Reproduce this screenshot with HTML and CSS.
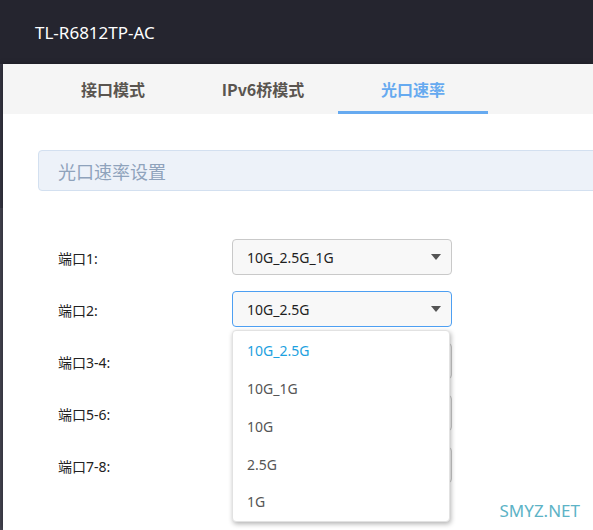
FILE: index.html
```html
<!DOCTYPE html>
<html lang="zh-CN">
<head>
<meta charset="utf-8">
<title>TL-R6812TP-AC</title>
<link rel="stylesheet" href="styles.css">
</head>
<body>
<div class="page">
  <header class="topbar"><span class="brand">TL-R6812TP-AC</span></header>
  <div class="main">
    <div class="rail"></div>
    <div class="panel">
      <nav class="tabs">
        <div class="tab">接口模式</div>
        <div class="tab">IPv6桥模式</div>
        <div class="tab active">光口速率</div>
      </nav>
      <div class="content">
        <div class="section-title">光口速率设置</div>
        <div class="form">
          <div class="row">
            <label class="label">端口1:</label>
            <div class="select"><span>10G_2.5G_1G</span><i class="caret"></i></div>
          </div>
          <div class="row">
            <label class="label">端口2:</label>
            <div class="select-wrap">
              <div class="select focus"><span>10G_2.5G</span><i class="caret"></i></div>
              <ul class="dropdown">
                <li class="opt selected">10G_2.5G</li>
                <li class="opt">10G_1G</li>
                <li class="opt">10G</li>
                <li class="opt">2.5G</li>
                <li class="opt">1G</li>
              </ul>
            </div>
          </div>
          <div class="row">
            <label class="label">端口3-4:</label>
            <div class="select"><span></span><i class="caret"></i></div>
          </div>
          <div class="row">
            <label class="label">端口5-6:</label>
            <div class="select"><span></span><i class="caret"></i></div>
          </div>
          <div class="row">
            <label class="label">端口7-8:</label>
            <div class="select"><span></span><i class="caret"></i></div>
          </div>
        </div>
      </div>
    </div>
  </div>
  <div class="watermark">SMYZ.NET</div>
</div>
</body>
</html>
```

FILE: styles.css
```css
* { box-sizing: border-box; }
html, body { margin: 0; padding: 0; }
body {
  font-family: "Noto Sans", "Noto Sans CJK SC", sans-serif;
  background: #fff;
}
.page {
  position: relative;
  width: 593px;
  height: 530px;
  overflow: hidden;
  display: flex;
  flex-direction: column;
}
.topbar {
  height: 64px;
  flex: none;
  background: #25252f;
  display: flex;
  align-items: center;
  padding-left: 35px;
}
.brand {
  color: #fff;
  font-size: 17px;
}
.main {
  flex: 1;
  display: flex;
  min-height: 0;
}
.rail {
  width: 3px;
  flex: none;
  background: linear-gradient(#3a3a48 0, #3a3a48 144px, #4a4a58 144px, #4a4a58 100%);
}
.panel {
  flex: 1;
  background: #fff;
  position: relative;
  box-shadow: -2px 0 5px rgba(0,0,0,0.35);
  min-width: 0;
}
.tabs {
  height: 50px;
  background: #f5f5f5;
  display: flex;
  padding-left: 35px;
}
.tab {
  width: 150px;
  display: flex;
  align-items: center;
  justify-content: center;
  font-family: "Noto Sans CJK SC", sans-serif;
  font-weight: 700;
  font-size: 16px;
  color: #5a5550;
  border-bottom: 3px solid transparent;
  padding-top: 3px;
}
.tab.active {
  color: #66aaf0;
  border-bottom-color: #66aaf0;
}
.content {
  padding: 36px 0 0 35px;
}
.section-title {
  height: 41px;
  margin-right: -12px;
  background: #edf2f9;
  border: 1px solid #d3e0f0;
  border-radius: 4px;
  display: flex;
  align-items: center;
  padding-left: 19px;
  font-family: "Noto Sans CJK SC", sans-serif;
  font-size: 18px;
  color: #8fa3bc;
}
.form {
  padding: 48px 0 0 20px;
  display: flex;
  flex-direction: column;
  gap: 16px;
}
.row {
  display: flex;
  align-items: center;
  height: 36px;
}
.label {
  width: 174px;
  flex: none;
  font-family: "Noto Sans", "Noto Sans CJK SC", sans-serif;
  font-size: 14px;
  color: #222;
  padding-top: 1px;
}
.select-wrap {
  position: relative;
}
.select {
  width: 220px;
  height: 36px;
  border: 1px solid #c9c9c9;
  border-radius: 4px;
  background: #f8f8f8;
  display: flex;
  align-items: center;
  justify-content: space-between;
  padding: 0 10px 0 14px;
  font-size: 14px;
  color: #1e1e1e;
}
.select.focus {
  border-color: #4d9ff2;
}
.caret {
  width: 0;
  height: 0;
  border-left: 5px solid transparent;
  border-right: 5px solid transparent;
  border-top: 6px solid #555;
}
.dropdown {
  position: absolute;
  left: 0;
  top: 39px;
  width: 218px;
  margin: 0;
  padding: 1px 0 0;
  list-style: none;
  background: #fff;
  border: 1px solid #e2e2e2;
  border-radius: 4px;
  box-shadow: 1px 2px 5px rgba(0,0,0,0.3);
  z-index: 2;
}
.opt {
  height: 37.75px;
  display: flex;
  align-items: center;
  padding-left: 14px;
  font-size: 14px;
  color: #555;
}
.opt.selected {
  color: #1da1e0;
}
.watermark {
  position: absolute;
  right: 13px;
  bottom: 8px;
  font-family: "Noto Sans", sans-serif;
  font-size: 17px;
  color: #5db3c6;
}
```
